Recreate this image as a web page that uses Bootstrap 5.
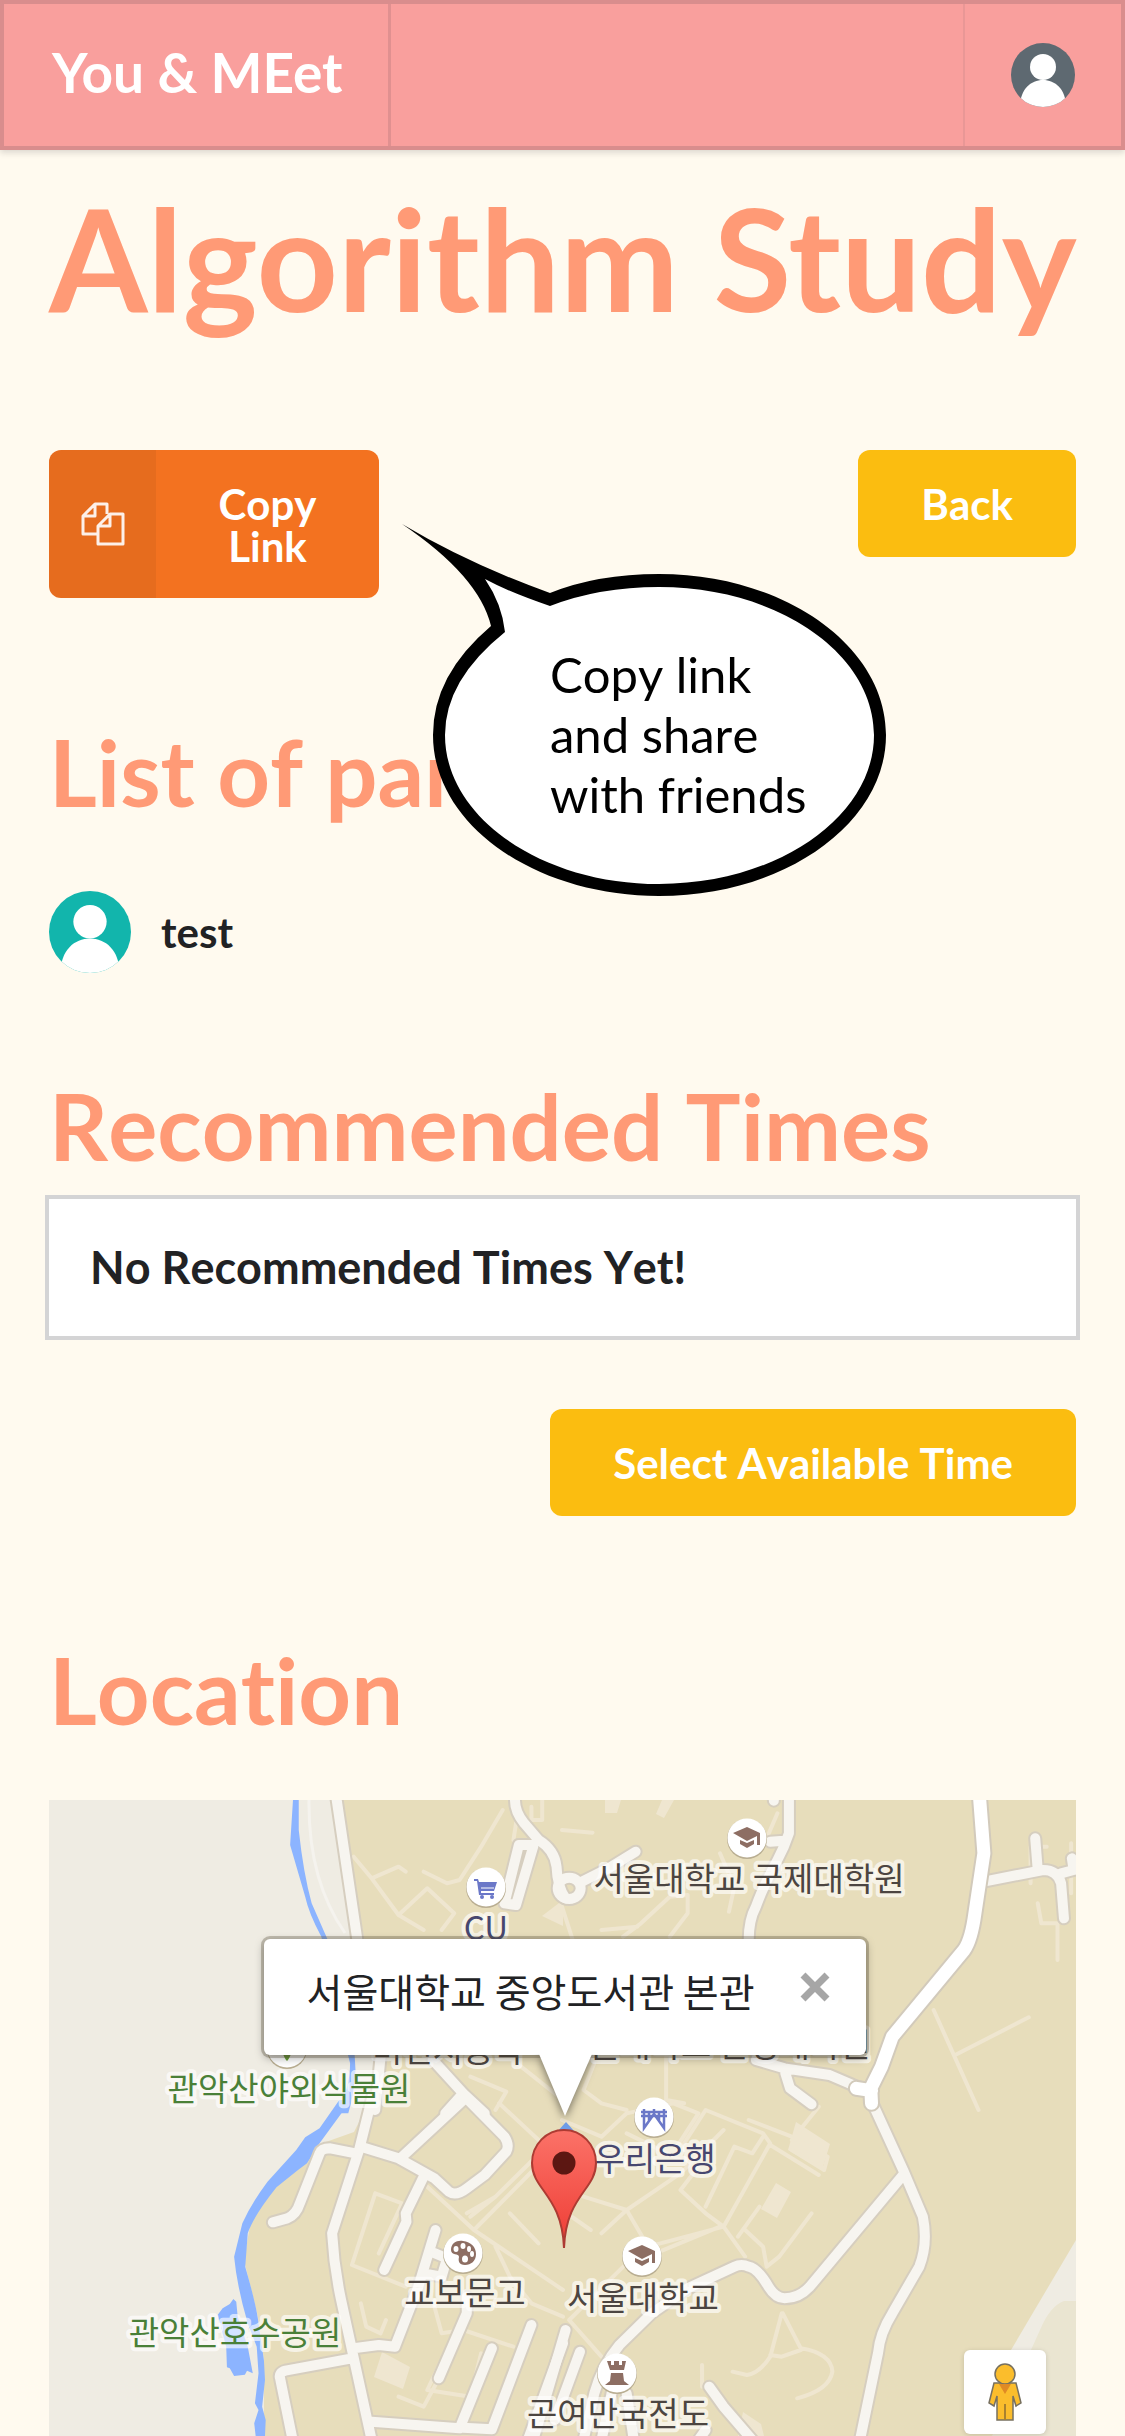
<!DOCTYPE html>
<html lang="en">
<head>
<meta charset="utf-8">
<meta name="viewport" content="width=device-width, initial-scale=1">
<title>You &amp; MEet</title>
<link href="https://cdn.jsdelivr.net/npm/bootstrap@5.3.0/dist/css/bootstrap.min.css" rel="stylesheet">
<style>
  body { background: #fffaef; color: #212224; font: 700 42px/1 Lato, "Noto Sans CJK KR", sans-serif; font-variant-ligatures: none; font-kerning: none; }
  .topbar { background: #f99f9d; height: 150px; border: 4px solid #d98d8d; box-shadow: 0 3px 6px rgba(34,36,38,.15); }
  .brand { color: #fff; font-size: 55px; padding: 0 45px 6px 48px; border-right: 3px solid #e09090; text-decoration: none; font-kerning: normal; }
  .account { width: 158px; border: 0; border-left: 2px solid #e99796; background: none; }
  .page-body { padding: 27px 49px 0; }
  .title-xl { color: #ff9a76; font-size: 142px; line-height: 160px; font-weight: 700; margin: 0 0 113px; white-space: nowrap; font-kerning: normal; }
  .title-lg { color: #ff9a76; font-size: 92px; line-height: 100px; font-weight: 700; margin: 0; }
  .act { border: 0; border-radius: 12px; color: #fff; font-weight: 700; font-size: 42px; line-height: 42px; font-kerning: none; font-variant-ligatures: none; }
  .act-yellow { background: #fbbd10; padding: 33px 63px 32px; }
  .act-orange { background: #f37220; width: 330px; overflow: hidden; padding: 0; }
  .act-ico { background: rgba(0,0,0,.05); width: 107px; }
  .act-txt { padding: 33px 50px 31px; }
  .gap-a { margin-top: 124px; }
  .gap-b { margin-top: 103px; }
  .people { margin-top: 69px; gap: 30px; }
  .notice { background: #fff; border: 4px solid #d4d4d5; margin: 19px -4px 69px; padding: 46px 41px; font-size: 45px; line-height: 45px; }
  .bubble { position: absolute; left: 350px; top: 70px; width: 492px; height: 380px; }
  .bubble p { position: absolute; left: 151px; top: 124px; margin: 0; color: #000; font-weight: 400; font-size: 49px; line-height: 60px; white-space: nowrap; }
  .bubble svg { position: absolute; left: 0; top: 0; }
  .map { margin-top: 60px; min-height: 636px; background: #e7ddbb; overflow: hidden; }
  .map-art { position: absolute; left: 0; top: 0; width: 100%; height: 100%; }
  .map-art text { font: 400 33px "Noto Sans CJK KR", sans-serif; text-anchor: middle; paint-order: stroke; stroke: rgba(255,255,255,.65); stroke-width: 8px; stroke-linejoin: round; fill: #4c4541; }
  .map-art .green { fill: #4a8038; }
  .map-art .navy { fill: #47476f; }
  #walks path, #roads path, #roads circle, #mainroad { vector-effect: non-scaling-stroke; }
  .ln { fill: none; stroke-linecap: round; stroke-linejoin: round; }
  .infowin { position: absolute; left: 50%; top: 139px; width: 602px; height: 116px; margin-left: -299px; padding: 0 34px 14px 43px; background: #fff; border-radius: 6px; box-shadow: 0 0 0 3px rgba(90,80,60,.32), 0 3px 10px rgba(0,0,0,.35); font: 400 39px/58px "Noto Sans CJK KR", sans-serif; }
  .infowin button { border: 0; background: none; padding: 0; margin-top: -6px; line-height: 0; }
  .infotail { position: absolute; left: 271px; top: 115px; filter: drop-shadow(0 3px 4px rgba(0,0,0,.5)); clip-path: inset(0 -20px -20px -20px); }
  .pegman { position: absolute; right: 30px; bottom: 2px; width: 82px; height: 84px; border: 0; border-radius: 6px; background: #fff; box-shadow: 0 1px 5px rgba(0,0,0,.15); }
</style>
</head>
<body class="d-flex flex-column min-vh-100">
<nav class="topbar d-flex justify-content-between align-items-stretch">
  <a class="brand d-flex align-items-center" href="#">You &amp; MEet</a>
  <button class="account d-flex align-items-center justify-content-center" type="button" aria-label="Account">
    <svg width="64" height="64" viewBox="0 0 64 64"><clipPath id="ava"><circle cx="32" cy="32" r="32"/></clipPath><g clip-path="url(#ava)"><path fill="#5e6971" d="M0 0h64v64H0z"/><circle cx="32" cy="24" r="13" fill="#fff"/><path fill="#fff" d="M9 64C9 46 20 37 32 37S55 46 55 64z"/></g></svg>
  </button>
</nav>
<main class="page-body d-flex flex-column flex-grow-1">
  <h1 class="title-xl">Algorithm Study</h1>
  <div class="d-flex justify-content-between align-items-start position-relative">
    <button class="act act-orange d-flex align-items-stretch" type="button">
      <span class="act-ico d-flex align-items-center justify-content-center flex-shrink-0"><svg width="44" height="44" viewBox="0 0 44 44" fill="none" stroke="#fff" stroke-opacity=".9" stroke-width="3" stroke-linejoin="round"><path d="M16 32H2V14L14 2h12v10M14 2v12H2M17 24L29 12h13v30H17zM29 12v12H17"/></svg></span>
      <span class="act-txt flex-grow-1">Copy Link</span>
    </button>
    <button class="act act-yellow" type="button">Back</button>
    <div class="bubble">
      <svg width="492" height="380" viewBox="400 520 492 380">
        <path d="M403 524Q470 564 551 593Q598 574 660 574C785 574 887 646 887 735S785 896 660 896S434 824 434 735Q434 675 492 626Q480 576 403 524z"/>
        <path fill="#fff" d="M486 579Q510 592 551 606Q600 587 660 587C778 587 875 653 875 735S778 884 660 884S446 817 446 735Q446 680 506 632Q503 604 486 579z"/>
      </svg>
      <p>Copy link<br>and share<br>with friends</p>
    </div>
  </div>
  <h2 class="title-lg gap-a">List of participants</h2>
  <div class="people d-flex align-items-center">
    <svg width="82" height="82" viewBox="0 0 64 64"><g clip-path="url(#ava)"><path fill="#12b5ac" d="M0 0h64v64H0z"/><circle cx="32" cy="24" r="13" fill="#fff"/><path fill="#fff" d="M9 64C9 46 20 37 32 37S55 46 55 64z"/></g></svg>
    <span>test</span>
  </div>
  <h2 class="title-lg gap-b">Recommended Times</h2>
  <div class="notice">No Recommended Times Yet!</div>
  <div class="d-flex justify-content-end"><button class="act act-yellow" type="button">Select Available Time</button></div>
  <h2 class="title-lg gap-a">Location</h2>
  <div class="map position-relative flex-grow-1">
    <svg class="map-art" viewBox="49 1800 1027 636" preserveAspectRatio="xMidYMin slice">
      <defs>
        <g id="walks">
          <g transform="translate(0 1780) scale(.35906 .33333)">
            <path d="M985 230L1035 295L1110 260L1130 275M1035 295L1110 405L1190 325L1265 400L1230 450M1110 405L1180 450M1180 275L1245 310L1280 300L1340 200L1400 90M1430 180L1440 110M1510 60V120H1480V80M1310 890L1410 935L1380 990M1440 850L1568 960"/>
          </g>
          <g transform="translate(562 1780) scale(.35906 .33333)">
            <path d="M0 150L85 158M600 100L560 200M30 480L0 380M170 470L220 430L300 350L350 345V400L300 470M440 220L480 320L465 395M110 450L210 440M90 850L60 930L110 970L180 990M290 830V960L340 970M1035 690L1160 990M1095 825L1300 712M1325 370L1335 430H1380V540M1305 310V200H1350M1418 190V340"/>
          </g>
          <g transform="translate(0 2100) scale(.35906 .33333)">
            <path d="M1045 280L1120 310L1055 460M1045 280L980 495L1130 560M1190 260L1320 390L1568 570M1320 390L1568 120M1310 350L1380 290L1568 90M1380 290L1300 340M1390 10L1520 140M1380 440L1420 530L1480 610L1568 650M1420 340L1500 430M1005 610L1020 680L1060 700L1075 660M1210 620L1230 700L1290 690L1430 740M1230 780L1190 870L1310 890L1340 760M1110 890L1180 920L1220 840"/>
          </g>
          <g transform="translate(562 2100) scale(.35906 .33333)">
            <path d="M0 60L110 110L180 40L310 10L380 40L320 140M180 100L330 180M60 290L180 330L330 220L450 90M180 330L110 400M180 330L240 440L450 380L580 130L560 100L400 30L340 130M450 380L400 340L330 270L380 200M400 320L480 140L530 160L560 110M450 380L510 470M510 390L560 440L570 500L605 470L695 340M490 410L550 320M520 60L640 110L740 170L730 210L640 150M580 135L715 225M640 120L715 20M260 460L440 380M0 330L80 390M180 490L20 660L110 770M612 640L580 770Q550 820 515 825L475 815M615 640L665 745Q750 760 753 815Q745 870 655 895M580 765L612 770L665 750M390 795V860"/>
          </g>
        </g>
        <g id="roads">
          <g transform="translate(0 1780) scale(.35906 .33333)">
            <path d="M935 40L995 478L1060 830L1045 990M1435 50Q1430 90 1460 130L1500 180Q1545 210 1550 260Q1552 320 1575 355M1480 195H1445L1405 370L1437 375L1485 200M1205 840L1290 940L1350 1000M1290 940L1240 1000"/>
          </g>
          <g transform="translate(562 1780) scale(.35906 .33333)">
            <path d="M632 40V160Q620 200 600 240Q560 320 540 380Q520 420 520 480M580 185L618 182M590 62V50M205 215L130 265L55 305M540 840L620 865L745 885L810 915L850 930M622 880L635 925L695 973M1175 305L1340 270Q1380 270 1390 310L1398 415M1325 270L1318 175M1390 280L1425 270L1420 235"/>
            <circle cx="20" cy="325" r="32"/>
          </g>
          <g transform="translate(0 2100) scale(.35906 .33333)">
            <path d="M1037 -10L1000 150L925 400Q930 500 950 600L1035 1020M1005 140L1110 175L1210 235L1250 275Q1270 290 1300 265L1350 225L1410 155Q1420 135 1405 110L1295 -10M1290 0L1115 175M990 160L920 145Q895 145 890 160L835 310Q825 345 800 355L760 367M1180 230L1130 340L1132 365L1070 510M1213 390L1165 560L1100 740L1055 735L985 745M980 775L795 812Q775 818 780 835L815 1020M1035 965L1280 985L1370 745M1290 983L1370 988L1480 675M1222 835L1300 640V590M1470 1020L1568 730M1200 455L1245 475L1230 530L1180 520"/>
          </g>
          <g transform="translate(562 2100) scale(.35906 .33333)">
            <path d="M865 10L950 210L1005 350Q1020 430 995 500L920 640Q885 700 880 760L830 1020M950 225L690 560Q660 595 620 595Q595 595 575 560Q545 505 520 500Q500 490 480 500L350 565L250 640L160 735Q110 800 90 880L60 1020M410 860L450 920L530 1020M10 690L-80 1020M50 755L-20 960M180 880L200 1020M140 870L110 1020M400 990L380 1020"/>
          </g>
        </g>
        <path id="mainroad" d="M1162 40L1175 220L1150 400Q1140 480 1120 510L920 770L890 860L860 925L862 970M820 925L862 932"/>
        <g id="gradcap"><circle r="20" cy="1" fill="#b9ae92"/><circle r="19.500" fill="#fff"/><path fill="#8d6e63" d="M-14-5L0-11L13-5V7H10V-2L0 3zM-7 2L0 5L7 2V6L0 10L-7 6z"/></g>
        <linearGradient id="pinred" x1="0" y1="0" x2="0" y2="1"><stop offset="0" stop-color="#fb7268"/><stop offset="1" stop-color="#ee3c34"/></linearGradient>
      </defs>

      <!-- land and water -->
      <path fill="#efece3" d="M49 1800H338L364 1937L378 2065L370 2100L354 2132L323 2143L273 2188L251 2220L244 2260L258 2317L264 2360V2436H49z"/>
      <path fill="#efece3" d="M1076 2240L1011 2350L1000 2436H1076z"/>
      <path fill="#eae5d1" d="M1076 2301H1064Q1050 2306 1040 2330L992 2436H1076z"/>
      <g fill="#8cb4ff">
        <path transform="translate(0 1780) scale(.35906 .33333)" d="M816 60H832V150Q845 280 868 370L912 478L950 600L985 770L990 870Q985 950 970 1000H935Q975 930 975 850L940 700L895 470Q860 400 850 350L808 195z"/>
        <path transform="translate(0 2100) scale(.35906 .33333)" d="M978 0L890 130L855 190L830 210L770 262Q705 350 690 400L683 500Q715 620 720 670L735 780L738 840L730 920L740 960L738 1008H712L708 970L720 930L710 910L720 820L715 740L690 670Q660 560 652 470L675 370Q700 310 745 245L825 150L850 112L890 85L945 0zM650 597L658 605L662 650L690 740L704 820L688 812L682 824L652 828L640 805L632 802L630 740L606 645L620 625L640 612z"/>
      </g>
      <path d="M309 1800Q308 1880 345 1933" fill="none" stroke="#f5f3ee" stroke-width="3"/>
      <g fill="#efe6d0"><path d="M605 1800h16l-4 13h-12zM662 1800h12l-10 18l-8-4zM542 1916l21-16v26zM382 2352l28 15l-7 22l-29-12zM776 2183l15 9l-14 26l-16-9zM796 2122l34 22l-8 26l-34-20zM743 2412l18 12l3 12h-26z"/></g>

      <!-- streets -->
      <use href="#walks" class="ln" stroke="#efe6d0" stroke-width="4"/>
      <use href="#roads" class="ln" stroke="#d6cebf" stroke-width="14"/>
      <use href="#roads" class="ln" stroke="#f7f5f0" stroke-width="10"/>
      <g transform="translate(562 1780) scale(.35906 .33333)" class="ln">
        <use href="#mainroad" stroke="#d2cabb" stroke-width="17"/>
        <use href="#mainroad" stroke="#fff" stroke-width="13"/>
      </g>

      <!-- places -->
      <use href="#gradcap" x="747" y="1838"/>
      <use href="#gradcap" x="642" y="2256"/>
      <g transform="translate(486 1887)"><circle r="20" cy="1" fill="#b9ae92"/><circle r="19.500" fill="#fff"/><path fill="#6b78c8" d="M-12-8h4l1 3H11L8 4H-5L-5 6H8V8H-7L-9-6H-12z"/><path stroke="#fff" d="M-5 1H8"/><circle cx="-4" cy="10" r="2" fill="#6b78c8"/><circle cx="6" cy="10" r="2" fill="#6b78c8"/></g>
      <g transform="translate(654 2117)"><circle r="20" cy="1" fill="#b9ae92"/><circle r="19.500" fill="#fff"/><path fill="none" stroke="#6b78c8" stroke-width="2.500" d="M-13-5H13M-13-1H13M-10-8V11L0-3L10 11V-8M0-8V-1M-5-5V4M5-5V4"/></g>
      <g transform="translate(617 2373)"><circle r="20" cy="1" fill="#b9ae92"/><circle r="19.500" fill="#fff"/><path fill="#8d6e63" d="M-10-12h4v4h3v-4h5v4h3v-4h4L7-3H-7zM-6 0H6L7 8L12 12H-12L-7 8z"/></g>
      <g transform="translate(463 2253)"><circle r="20" cy="1" fill="#b9ae92"/><circle r="19.500" fill="#fff"/><path fill="#8d6e63" d="M-12-3C-12-10-6-13 0-12C8-11 13-6 13 1C13 8 8 12 2 12C-4 12-5 8-4 4C-4 0-12 3-12-3z"/><g fill="#fff"><ellipse cx="-7" cy="-4" rx="2.500" ry="3"/><ellipse cx="0" cy="-7" rx="2.500" ry="3"/><ellipse cx="6" cy="-4" rx="2" ry="3"/><ellipse cx="9" cy="1" rx="2" ry="3"/><ellipse cx="2" cy="6" rx="3" ry="3.500"/></g></g>
      <g transform="translate(287 2048)"><circle r="20" cy="1" fill="#b9ae92"/><circle r="19.500" fill="#fff"/><path fill="#689f38" d="M0-10C8-6 5 8 0 13C-5 8-8-6 0-10z"/></g>
      <text x="749" y="1891">서울대학교 국제대학원</text>
      <text x="486" y="1940" class="navy">CU</text>
      <text x="448" y="2062">미전시공학</text>
      <text x="715" y="2057">서울대학교 환경대학원</text>
      <text x="289" y="2101" class="green">관악산야외식물원</text>
      <text x="655" y="2171" class="navy">우리은행</text>
      <text x="465" y="2305">교보문고</text>
      <text x="643" y="2310">서울대학교</text>
      <text x="235" y="2345" class="green">관악산호수공원</text>
      <text x="618" y="2426">곤여만국전도</text>

      <!-- pin -->
      <path fill="#6f9de8" d="M566 2122l9 10h-18z"/>
      <path fill="url(#pinred)" stroke="#ad3b33" stroke-width="2" d="M564 2248C562 2195 532 2190 532 2163A32 33 0 0 1 596 2163C596 2190 566 2195 564 2248z"/>
      <circle cx="564" cy="2163" r="11.500" fill="#5c1712"/>
    </svg>
    <div class="infowin d-flex align-items-center justify-content-between">
      <svg class="infotail" width="62" height="64" viewBox="0 0 62 64"><path fill="#fff" d="M4 0H57L30 62z"/></svg>
      <span>서울대학교 중앙도서관 본관</span>
      <button type="button" aria-label="Close"><svg width="34" height="34" viewBox="0 0 34 34" stroke="#a6a6a6" stroke-width="7"><path d="M5 5L29 29M29 5L5 29"/></svg></button>
    </div>
    <button class="pegman d-flex align-items-center justify-content-center p-0" type="button" aria-label="Street View">
      <svg width="36" height="60" viewBox="0 0 36 60"><g fill="#fbbd2c" stroke="#77705f" stroke-width="1.500"><path d="M7 21H29L34 41L29 44L26 34V58H10V34L7 44L2 41z"/><circle cx="18" cy="12" r="10"/></g><path fill="#e08a24" d="M12 22H24L18 32z"/><path stroke="#a9812f" stroke-width="2" d="M18 42V58"/></svg>
    </button>
  </div>
</main>
<script src="https://cdn.jsdelivr.net/npm/bootstrap@5.3.0/dist/js/bootstrap.bundle.min.js"></script>
</body>
</html>
